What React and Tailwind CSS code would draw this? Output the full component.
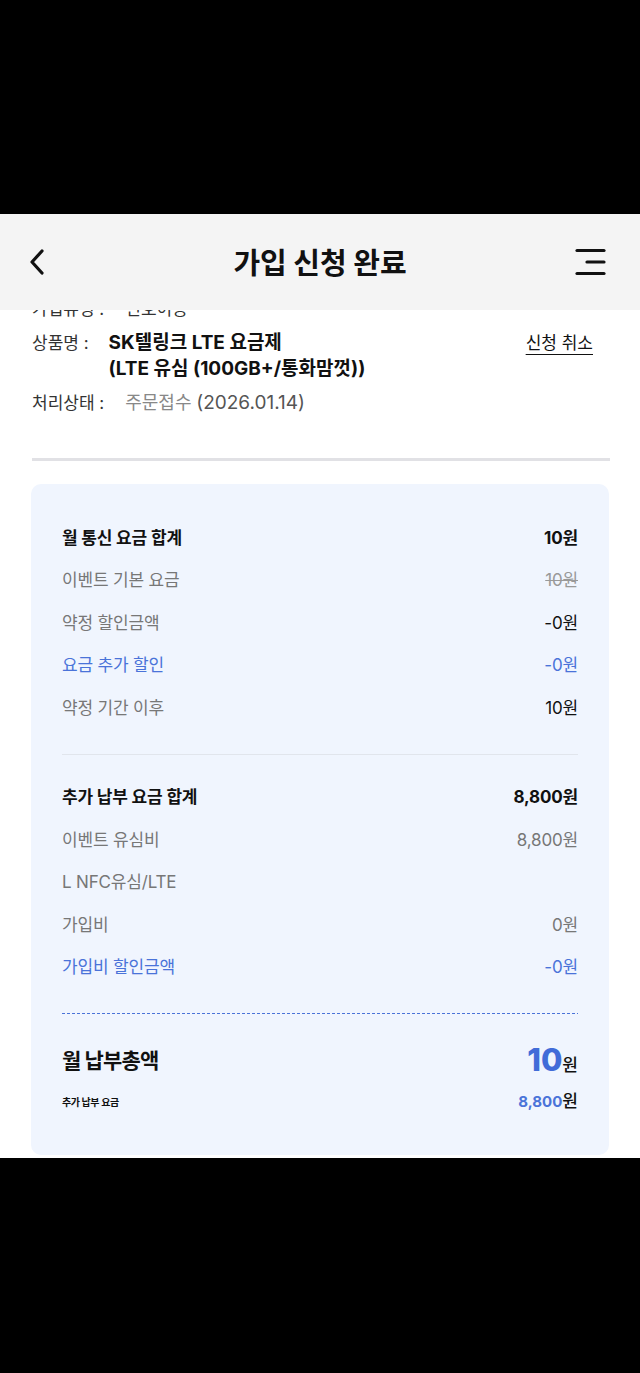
export default function App() {
  const monthly = [
    { label: '월 통신 요금 합계', value: '10원', kind: 'head' },
    { label: '이벤트 기본 요금', value: '10원', kind: 'strike' },
    { label: '약정 할인금액', value: '-0원', kind: 'dark' },
    { label: '요금 추가 할인', value: '-0원', kind: 'blue' },
    { label: '약정 기간 이후', value: '10원', kind: 'dark' },
  ];
  const extra = [
    { label: '추가 납부 요금 합계', value: '8,800원', kind: 'head' },
    { label: '이벤트 유심비', value: '8,800원', kind: 'gray' },
    { label: 'L NFC유심/LTE', value: '', kind: 'gray' },
    { label: '가입비', value: '0원', kind: 'gray' },
    { label: '가입비 할인금액', value: '-0원', kind: 'blue' },
  ];

  const labelClass = {
    head: 'font-bold text-[#111]',
    strike: 'text-[#777]',
    dark: 'text-[#777]',
    gray: 'text-[#777]',
    blue: 'text-[#4a73d9]',
  };
  const valueClass = {
    head: 'font-bold text-[#111]',
    strike: 'text-[#999] line-through',
    dark: 'text-[#111]',
    gray: 'text-[#777]',
    blue: 'text-[#4a73d9]',
  };

  const Row = ({ item }) => (
    <div className="h-[42.5px] flex items-center justify-between text-[17px] tracking-[-0.01em]">
      <span className={labelClass[item.kind]}>{item.label}</span>
      <span className={valueClass[item.kind]}>{item.value}</span>
    </div>
  );

  return (
    <div className="w-[640px] h-[1373px] bg-black flex flex-col font-['Inter','Noto_Sans_CJK_KR',sans-serif]">
      <div className="h-[214px] shrink-0" />

      <div className="relative h-[944px] bg-white overflow-hidden shrink-0">
        {/* sticky header over the scrolled content */}
        <header className="absolute top-0 left-0 right-0 z-10 h-[96px] bg-[#f4f4f4] grid grid-cols-[1fr_auto_1fr] items-center">
          <div className="pl-[28px] flex">
            <svg width="18" height="28" viewBox="0 0 18 28" fill="none">
              <path d="M14 3 L4 14 L14 25" stroke="#111" strokeWidth="3.2" strokeLinecap="round" strokeLinejoin="round" />
            </svg>
          </div>
          <h1 className="text-[29px] font-bold text-[#111] font-['Noto_Sans_CJK_KR',sans-serif]">가입 신청 완료</h1>
          <div className="pr-[34px] flex justify-end">
            <svg width="32" height="28" viewBox="0 0 32 28" fill="none">
              <path d="M3 2.5 H30" stroke="#111" strokeWidth="3.2" strokeLinecap="round" />
              <path d="M13 14 H30" stroke="#111" strokeWidth="3.2" strokeLinecap="round" />
              <path d="M3 25.5 H30" stroke="#111" strokeWidth="3.2" strokeLinecap="round" />
            </svg>
          </div>
        </header>

        <div className="pt-[82px] px-[32px] text-[17px] leading-[26px]">
          <div className="flex flex-col gap-[8px]">
            <div className="flex gap-[21px]">
              <span className="text-[#333]">가입유형 :</span>
              <span className="text-[#333]">번호이동</span>
            </div>
            <div className="flex items-start gap-[20px]">
              <span className="text-[#333] shrink-0">상품명 :</span>
              <span className="font-bold text-[#111] text-[19px] flex-1">
                SK텔링크 LTE 요금제
                <br />
                (LTE 유심 (100GB+/통화맘껏))
              </span>
              <span className="text-[#111] underline underline-offset-[5px] mr-[15px]">신청 취소</span>
            </div>
            <div className="flex gap-[21px]">
              <span className="text-[#333]">처리상태 :</span>
              <span>
                <span className="text-[#888] text-[18px]">주문접수</span>{' '}
                <span className="text-[#555] text-[19px]">(2026.01.14)</span>
              </span>
            </div>
          </div>
        </div>

        <div className="mt-[42px] ml-[32px] w-[578px] h-[3px] bg-[#e1e1e5]" />

        <div className="mt-[23px] mx-[31px] h-[671px] rounded-[10px] bg-[#f0f5fe] px-[31px] pt-[33px]">
          {monthly.map((item) => (
            <Row key={item.label} item={item} />
          ))}
          <div className="mt-[24px] h-px bg-[#e1e5ec]" />
          <div className="mt-[22px]">
            {extra.map((item) => (
              <Row key={item.label} item={item} />
            ))}
          </div>
          <div className="mt-[24px] h-px bg-[repeating-linear-gradient(90deg,#4a73d9_0_3px,transparent_3px_5px)]" />
          <div className="mt-[27px] h-[40px] flex items-center justify-between">
            <span className="text-[21px] font-bold text-[#111] tracking-[-0.04em]">월 납부총액</span>
            <span className="flex items-baseline">
              <span className="text-[31px] font-extrabold text-[#416cd8] leading-none">10</span>
              <span className="text-[17px] font-medium text-[#111]">원</span>
            </span>
          </div>
          <div className="mt-[9px] h-[24px] flex items-center justify-between">
            <span className="text-[10px] font-bold text-[#111] tracking-[-0.04em]">추가 납부 요금</span>
            <span className="flex items-baseline">
              <span className="text-[15px] font-bold text-[#4a73d9]">8,800</span>
              <span className="text-[17px] font-medium text-[#111]">원</span>
            </span>
          </div>
        </div>
      </div>

      <div className="flex-1" />
    </div>
  );
}
